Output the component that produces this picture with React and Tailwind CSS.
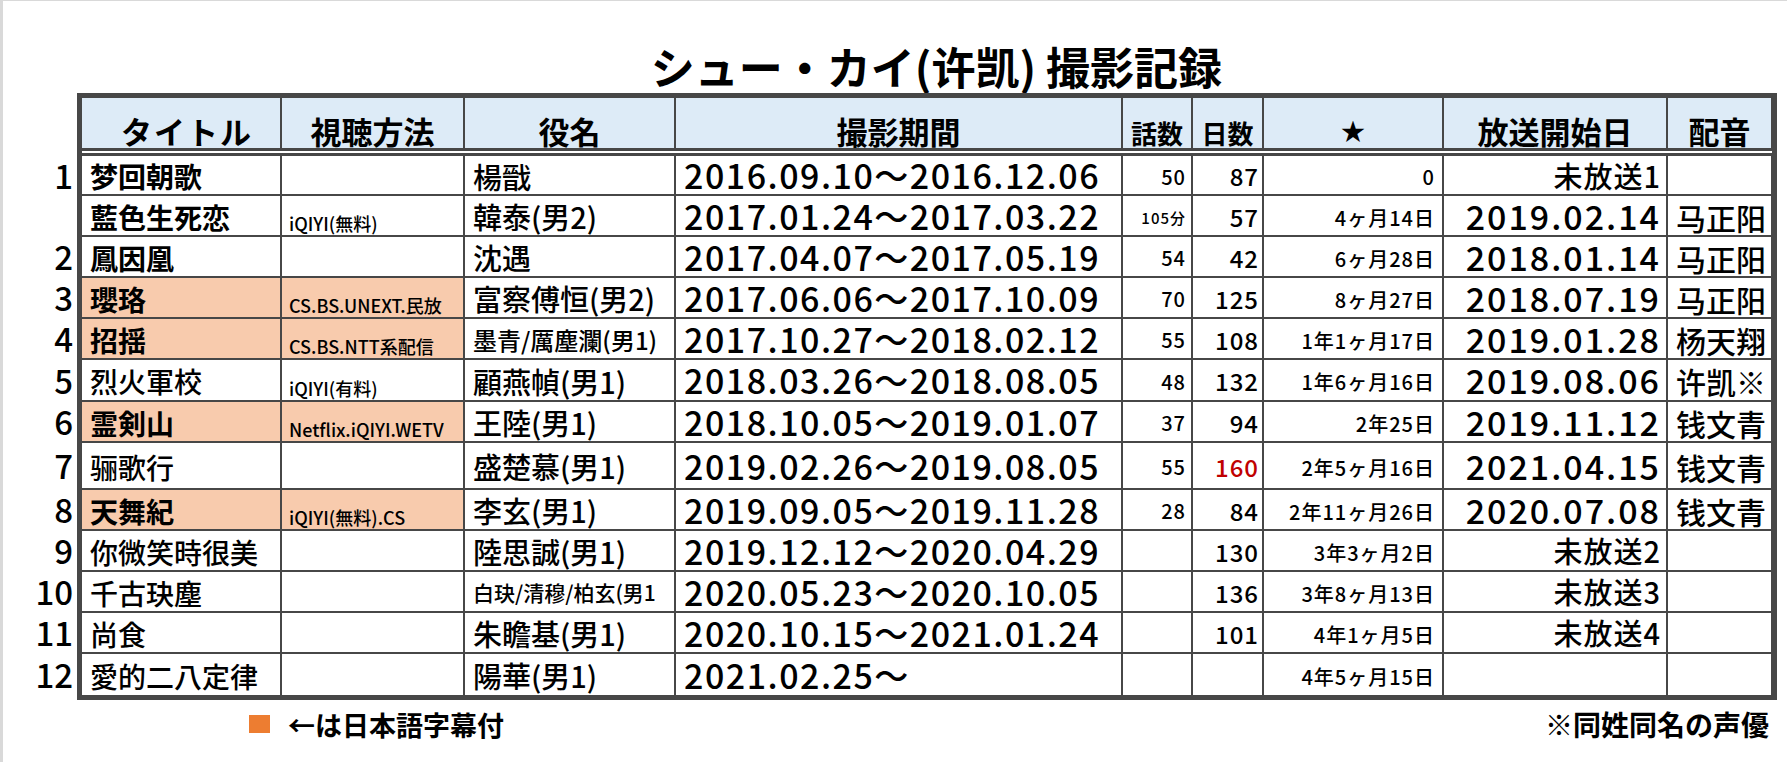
const rows = [
  { n: "1", title: "梦回朝歌", tb: true, watch: "", role: "楊戩", period: "2016.09.10～2016.12.06", eps: "50", days: "87", star: "0", air: "未放送1", airText: true, dub: "", h: "h-[38px]" },
  { n: "", title: "藍色生死恋", tb: true, watch: "iQIYI(無料)", role: "韓泰(男2)", period: "2017.01.24～2017.03.22", eps: "105分", epsSmall: true, days: "57", star: "4ヶ月14日", air: "2019.02.14", dub: "马正阳", h: "h-[39px]" },
  { n: "2", title: "鳳因凰", tb: true, watch: "", role: "沈遇", period: "2017.04.07～2017.05.19", eps: "54", days: "42", star: "6ヶ月28日", air: "2018.01.14", dub: "马正阳", h: "h-[39px]" },
  { n: "3", title: "瓔珞", tb: true, orange: true, watch: "CS.BS.UNEXT.民放", role: "富察傅恒(男2)", period: "2017.06.06～2017.10.09", eps: "70", days: "125", star: "8ヶ月27日", air: "2018.07.19", dub: "马正阳", h: "h-[39px]" },
  { n: "4", title: "招揺", tb: true, orange: true, watch: "CS.BS.NTT系配信", role: "墨青/厲塵瀾(男1)", roleSize: "text-[24px]", period: "2017.10.27～2018.02.12", eps: "55", days: "108", star: "1年1ヶ月17日", air: "2019.01.28", dub: "杨天翔", h: "h-[39px]" },
  { n: "5", title: "烈火軍校", watch: "iQIYI(有料)", role: "顧燕幀(男1)", period: "2018.03.26～2018.08.05", eps: "48", days: "132", star: "1年6ヶ月16日", air: "2019.08.06", dub: "许凯※", h: "h-[40px]" },
  { n: "6", title: "霊剣山", tb: true, orange: true, watch: "Netflix.iQIYI.WETV", role: "王陸(男1)", period: "2018.10.05～2019.01.07", eps: "37", days: "94", star: "2年25日", air: "2019.11.12", dub: "钱文青", h: "h-[39px]" },
  { n: "7", title: "骊歌行", watch: "", role: "盛楚慕(男1)", period: "2019.02.26～2019.08.05", eps: "55", days: "160", red: true, star: "2年5ヶ月16日", air: "2021.04.15", dub: "钱文青", h: "h-[45px]" },
  { n: "8", title: "天舞紀", tb: true, orange: true, watch: "iQIYI(無料).CS", role: "李玄(男1)", period: "2019.09.05～2019.11.28", eps: "28", days: "84", star: "2年11ヶ月26日", air: "2020.07.08", dub: "钱文青", h: "h-[39px]" },
  { n: "9", title: "你微笑時很美", watch: "", role: "陸思誠(男1)", period: "2019.12.12～2020.04.29", eps: "", days: "130", star: "3年3ヶ月2日", air: "未放送2", airText: true, dub: "", h: "h-[39px]" },
  { n: "10", title: "千古玦塵", watch: "", role: "白玦/清穆/柏玄(男1", roleSize: "text-[21px]", clip: true, period: "2020.05.23～2020.10.05", eps: "", days: "136", star: "3年8ヶ月13日", air: "未放送3", airText: true, dub: "", h: "h-[39px]" },
  { n: "11", title: "尚食", watch: "", role: "朱瞻基(男1)", period: "2020.10.15～2021.01.24", eps: "", days: "101", star: "4年1ヶ月5日", air: "未放送4", airText: true, dub: "", h: "h-[39px]" },
  { n: "12", title: "愛的二八定律", watch: "", role: "陽華(男1)", period: "2021.02.25～", eps: "", days: "", star: "4年5ヶ月15日", air: "", dub: "", h: "h-[41px]" },
];

const cols = "grid grid-cols-[198px_181px_209px_445px_68px_69px_178px_222px_103px] gap-x-[2px]";

function HeadCell({ children, className = "" }) {
  return (
    <div className={`bg-[#ddebf7] h-[50px] flex items-end justify-center pb-[2px] font-bold leading-none whitespace-nowrap ${className}`}>
      {children}
    </div>
  );
}

export default function App() {
  return (
    <div className="w-[1787px] h-[762px] bg-white border-l-[3px] border-t border-[#d9d9d9] text-black overflow-hidden font-['Noto_Sans_CJK_JP',sans-serif]">
      {/* title */}
      <div className="h-[92px] flex items-end justify-center pl-[83px] pb-[5px]">
        <h1 className="text-[44px] leading-none font-bold">シュー・カイ(许凯) 撮影記録</h1>
      </div>

      <div className="flex">
        {/* row numbers */}
        <div className="w-[74px] pt-[63px] flex flex-col gap-[2px]">
          {rows.map((r, i) => (
            <div key={i} className={`${r.h} flex items-center justify-end pr-[4px] text-[33px] leading-none font-medium`}>
              {r.n}
            </div>
          ))}
        </div>

        {/* table */}
        <div className="w-[1700px] border-[5px] border-[#474747] bg-[#474747]">
          <div className={cols}>
            <HeadCell className="text-[31px] pl-[12px] tracking-[2px]">タイトル</HeadCell>
            <HeadCell className="text-[31px]">視聴方法</HeadCell>
            <HeadCell className="text-[31px]">役名</HeadCell>
            <HeadCell className="text-[31px]">撮影期間</HeadCell>
            <HeadCell className="text-[26px]">話数</HeadCell>
            <HeadCell className="text-[26px]">日数</HeadCell>
            <HeadCell className="text-[24px] pb-[6px]">★</HeadCell>
            <HeadCell className="text-[31px]">放送開始日</HeadCell>
            <HeadCell className="text-[31px]">配音</HeadCell>
          </div>
          <div className="h-[3px]" />
          <div className="h-[2px] bg-white" />
          <div className="h-[3px]" />
          <div className={`${cols} gap-y-[2px]`}>
            {rows.map((r, i) => {
              const fill = r.orange ? "bg-[#f8cbad]" : "bg-white";
              return [
                <div key={`t${i}`} className={`${r.h} ${fill} flex items-center pl-[8px] pt-[2px] text-[28px] leading-none whitespace-nowrap ${r.tb ? "font-bold" : "font-medium"}`}>
                  {r.title}
                </div>,
                <div key={`w${i}`} className={`${r.h} ${fill} flex items-end pl-[7px] pb-[3px] text-[18px] leading-none whitespace-nowrap font-medium`}>
                  {r.watch}
                </div>,
                <div key={`r${i}`} className={`${r.h} bg-white flex items-center pl-[8px] pt-[2px] ${r.roleSize || "text-[29px]"} leading-none whitespace-nowrap font-medium ${r.clip ? "overflow-hidden" : ""}`}>
                  {r.role}
                </div>,
                <div key={`p${i}`} className={`${r.h} bg-white flex items-center pl-[8px] text-[34px] tracking-[1.5px] leading-none whitespace-nowrap font-medium`}>
                  {r.period}
                </div>,
                <div key={`e${i}`} className={`${r.h} bg-white flex items-center justify-end pr-[5px] pt-[3px] ${r.epsSmall ? "text-[15px]" : "text-[20px]"} tracking-[1px] leading-none whitespace-nowrap font-medium`}>
                  {r.eps}
                </div>,
                <div key={`d${i}`} className={`${r.h} bg-white flex items-center justify-end pr-[3px] pt-[2px] text-[24px] tracking-[1px] leading-none whitespace-nowrap font-medium ${r.red ? "text-[#c00000]" : ""}`}>
                  {r.days}
                </div>,
                <div key={`s${i}`} className={`${r.h} bg-white flex items-center justify-end pr-[7px] pt-[4px] text-[20px] tracking-[1px] leading-none whitespace-nowrap font-medium`}>
                  {r.star}
                </div>,
                <div key={`a${i}`} className={`${r.h} bg-white flex items-center justify-end pr-[5px] ${r.airText ? "text-[29px] tracking-[1px]" : "text-[34px] tracking-[2px]"} leading-none whitespace-nowrap font-medium`}>
                  {r.air}
                </div>,
                <div key={`v${i}`} className={`${r.h} bg-white flex items-center pl-[8px] pt-[2px] text-[30px] leading-none whitespace-nowrap font-medium`}>
                  {r.dub}
                </div>,
              ];
            })}
          </div>
        </div>
      </div>

      {/* legend */}
      <div className="flex items-center justify-between pt-[10px] pr-[18px]">
        <div className="flex items-center ml-[246px] gap-[18px]">
          <span className="w-[21px] h-[18px] bg-[#ed7d31]" />
          <span className="text-[27px] leading-none font-bold">←は日本語字幕付</span>
        </div>
        <span className="text-[28px] leading-none font-bold">※同姓同名の声優</span>
      </div>
    </div>
  );
}
